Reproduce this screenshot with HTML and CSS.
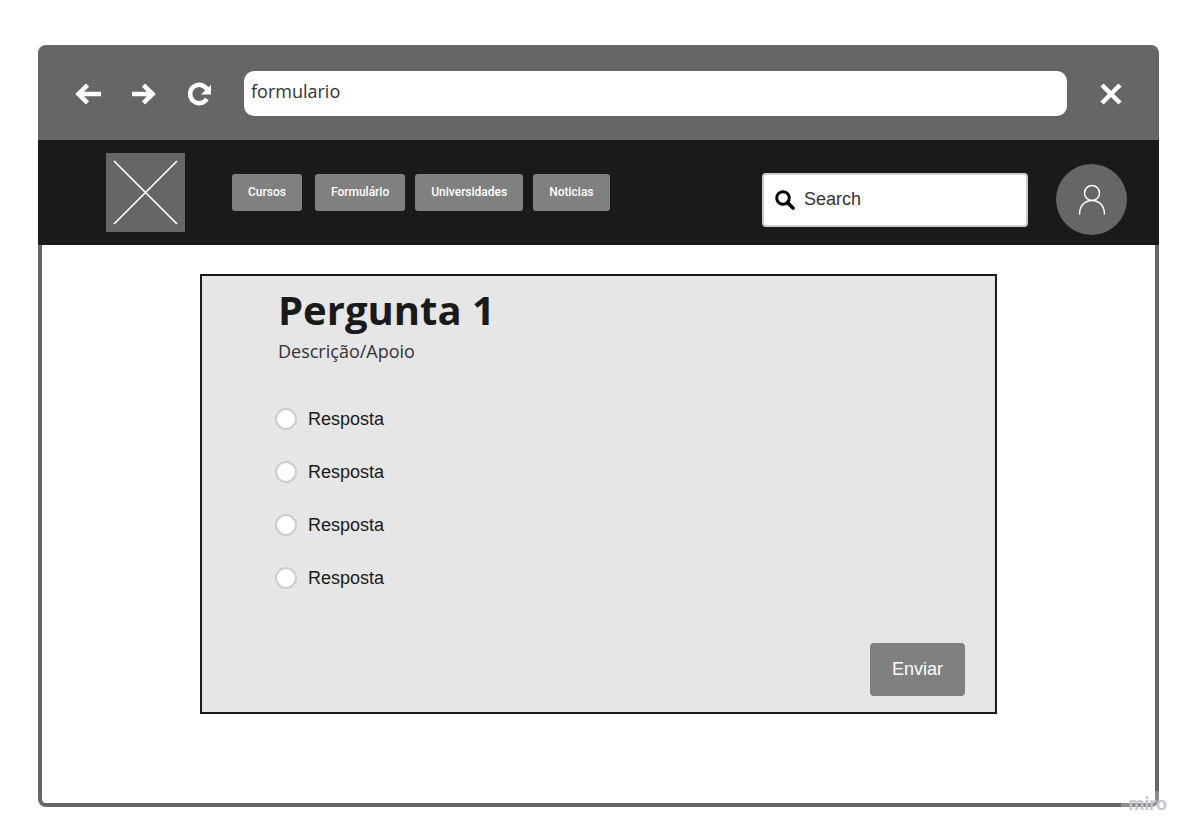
FILE: index.html
```html
<!DOCTYPE html>
<html lang="pt">
<head>
<meta charset="utf-8">
<meta name="viewport" content="width=device-width, initial-scale=1">
<title>Formulário</title>
<link rel="stylesheet" href="styles.css">
</head>
<body>
<div class="window">
  <div class="toolbar">
    <div class="controls">
      <button class="icon-button" type="button" aria-label="Voltar">
        <svg width="28" height="24" viewBox="0 0 28 24"><path d="M27 12H5M13.500 3.200L4.500 12l9 8.800" fill="none" stroke="#fff" stroke-width="4.600"/></svg>
      </button>
      <button class="icon-button" type="button" aria-label="Avançar">
        <svg width="28" height="24" viewBox="0 0 28 24"><path d="M2 12h20M13.500 3.200L22.500 12l-9 8.800" fill="none" stroke="#fff" stroke-width="4.600"/></svg>
      </button>
      <button class="icon-button" type="button" aria-label="Recarregar">
        <svg width="28" height="24" viewBox="0 0 28 24"><path d="M20.800 16.800A9 9.200 0 1 1 21 7.500" fill="none" stroke="#fff" stroke-width="4.500"/><path d="M25 2.800v9.700H15z" fill="#fff"/></svg>
      </button>
    </div>
    <input class="address" type="text" value="formulario" aria-label="Endereço">
    <button class="icon-button" type="button" aria-label="Fechar">
      <svg width="24" height="24" viewBox="0 0 24 24"><path d="M3 3l18 18M21 3L3 21" fill="none" stroke="#fff" stroke-width="4.500"/></svg>
    </button>
  </div>
  <header class="header">
    <a class="logo" href="#" aria-label="Início">
      <svg width="79" height="79" viewBox="0 0 79 79"><path d="M8 8l63 63M71 8L8 71" stroke="#fff" stroke-width="1.700"/></svg>
    </a>
    <nav class="nav">
      <a class="nav-link" href="#">Cursos</a>
      <a class="nav-link nav-link-form" href="#">Formulário</a>
      <a class="nav-link" href="#">Universidades</a>
      <a class="nav-link" href="#">Noticias</a>
    </nav>
    <label class="search">
      <svg width="20" height="20" viewBox="0 0 20 20"><circle cx="8" cy="8" r="6.300" fill="none" stroke="#000" stroke-width="3"/><path d="M12.500 12.500l5.500 5.500" stroke="#000" stroke-width="3.600" stroke-linecap="round"/></svg>
      <input class="search-input" type="text" placeholder="Search" aria-label="Search">
    </label>
    <button class="avatar" type="button" aria-label="Perfil">
      <svg width="28" height="32" viewBox="0 0 28 32"><circle cx="14" cy="9" r="7.500" fill="none" stroke="#fff" stroke-width="1.500"/><path d="M1.500 30.500C1.500 22 6.500 16.500 14 16.500S26.500 22 26.500 30.500" fill="none" stroke="#fff" stroke-width="1.500"/></svg>
    </button>
  </header>
  <main class="page">
    <form class="card">
      <h1 class="title">Pergunta 1</h1>
      <p class="description">Descrição/Apoio</p>
      <div class="answers">
        <label class="answer"><input class="radio" type="radio" name="resposta" value="1">Resposta</label>
        <label class="answer"><input class="radio" type="radio" name="resposta" value="2">Resposta</label>
        <label class="answer"><input class="radio" type="radio" name="resposta" value="3">Resposta</label>
        <label class="answer"><input class="radio" type="radio" name="resposta" value="4">Resposta</label>
      </div>
      <button class="submit" type="button">Enviar</button>
    </form>
  </main>
  <span class="watermark">miro</span>
</div>
</body>
</html>
```
FILE: styles.css
```css
* {
  box-sizing: border-box;
}

body {
  margin: 0;
  min-height: 100vh;
  display: flex;
  padding: 45px 35px 29px 38px;
  background: #fff;
  color: #1a1a1a;
  font-family: "Liberation Sans", Arial, sans-serif;
  font-size: 18px;
}

.window {
  position: relative;
  flex: 1;
  display: flex;
  flex-direction: column;
}

.toolbar {
  display: flex;
  align-items: center;
  padding: 26px 36px 24px;
  background: #666;
  border-radius: 8px 8px 0 0;
}

.controls {
  display: flex;
  gap: 28px;
  margin-right: 30px;
}

.icon-button {
  display: flex;
  padding: 0;
  border: 0;
  background: none;
}

.address {
  flex: 1;
  min-width: 0;
  height: 45px;
  margin-right: 32px;
  padding: 0 7px 5px;
  border: 0;
  border-radius: 10px;
  background: #fff;
  color: #333;
  font: 400 18px "Open Sans", sans-serif;
}

.header {
  display: flex;
  align-items: flex-start;
  padding: 13px 32px 10px 68px;
  background: #1a1a1a;
}

.logo {
  display: flex;
  background: #666;
}

.nav {
  display: flex;
  gap: 10px;
  margin: 21px 0 0 47px;
}

.nav-link {
  padding: 0 16px;
  border-radius: 3px;
  background: #808080;
  color: #fff;
  font: 500 12px/37px Roboto, sans-serif;
  text-decoration: none;
}

.nav-link-form {
  margin-left: 3px;
}

.search {
  display: flex;
  align-items: center;
  gap: 9px;
  width: 266px;
  height: 54px;
  margin: 20px 28px 0 auto;
  padding: 0 11px;
  border: 2px solid #ccc;
  border-radius: 4px;
  background: #fff;
}

.search-input {
  flex: 1;
  min-width: 0;
  padding: 0 0 2px;
  border: 0;
  background: none;
  color: #1a1a1a;
  font: 18px "Liberation Sans", Arial, sans-serif;
}

.search-input::placeholder {
  color: #333;
  opacity: 1;
}

.avatar {
  display: flex;
  align-items: center;
  justify-content: center;
  width: 71px;
  height: 71px;
  margin-top: 11px;
  padding: 0;
  border: 0;
  border-radius: 50%;
  background: #666;
}

.page {
  flex: 1;
  padding: 29px 158px 89px;
  border: solid #666;
  border-width: 0 4px 4px;
  border-radius: 0 0 8px 8px;
}

.card {
  display: flex;
  flex-direction: column;
  padding: 7px 30px 16px 73px;
  border: 2px solid #1a1a1a;
  background: #e6e6e6;
}

.title {
  margin: 0 0 0 3px;
  font: 700 40px/54px "Open Sans", sans-serif;
}

.description {
  margin: 1px 0 0 3px;
  color: #333;
  font: 400 18px/26px "Open Sans", sans-serif;
}

.answers {
  display: flex;
  flex-direction: column;
  gap: 31px;
  margin-top: 44px;
}

.answer {
  display: flex;
  align-items: center;
  gap: 11px;
  line-height: 22px;
}

.radio {
  appearance: none;
  width: 22px;
  height: 22px;
  margin: 0;
  border: 2px solid #ccc;
  border-radius: 50%;
  background: #fff;
}

.radio:checked {
  border: 6px solid #808080;
}

.submit {
  align-self: flex-end;
  height: 53px;
  margin-top: 54px;
  padding: 0 22px;
  border: 0;
  border-radius: 4px;
  background: #808080;
  color: #fff;
  font: 18px "Liberation Sans", Arial, sans-serif;
}

.watermark {
  position: absolute;
  right: -10px;
  bottom: -8px;
  padding: 0 2px 0 8px;
  background: rgba(255, 255, 255, 0.25);
  color: #c4c4d0;
  font: 700 19px/24px Lato, sans-serif;
}
```
